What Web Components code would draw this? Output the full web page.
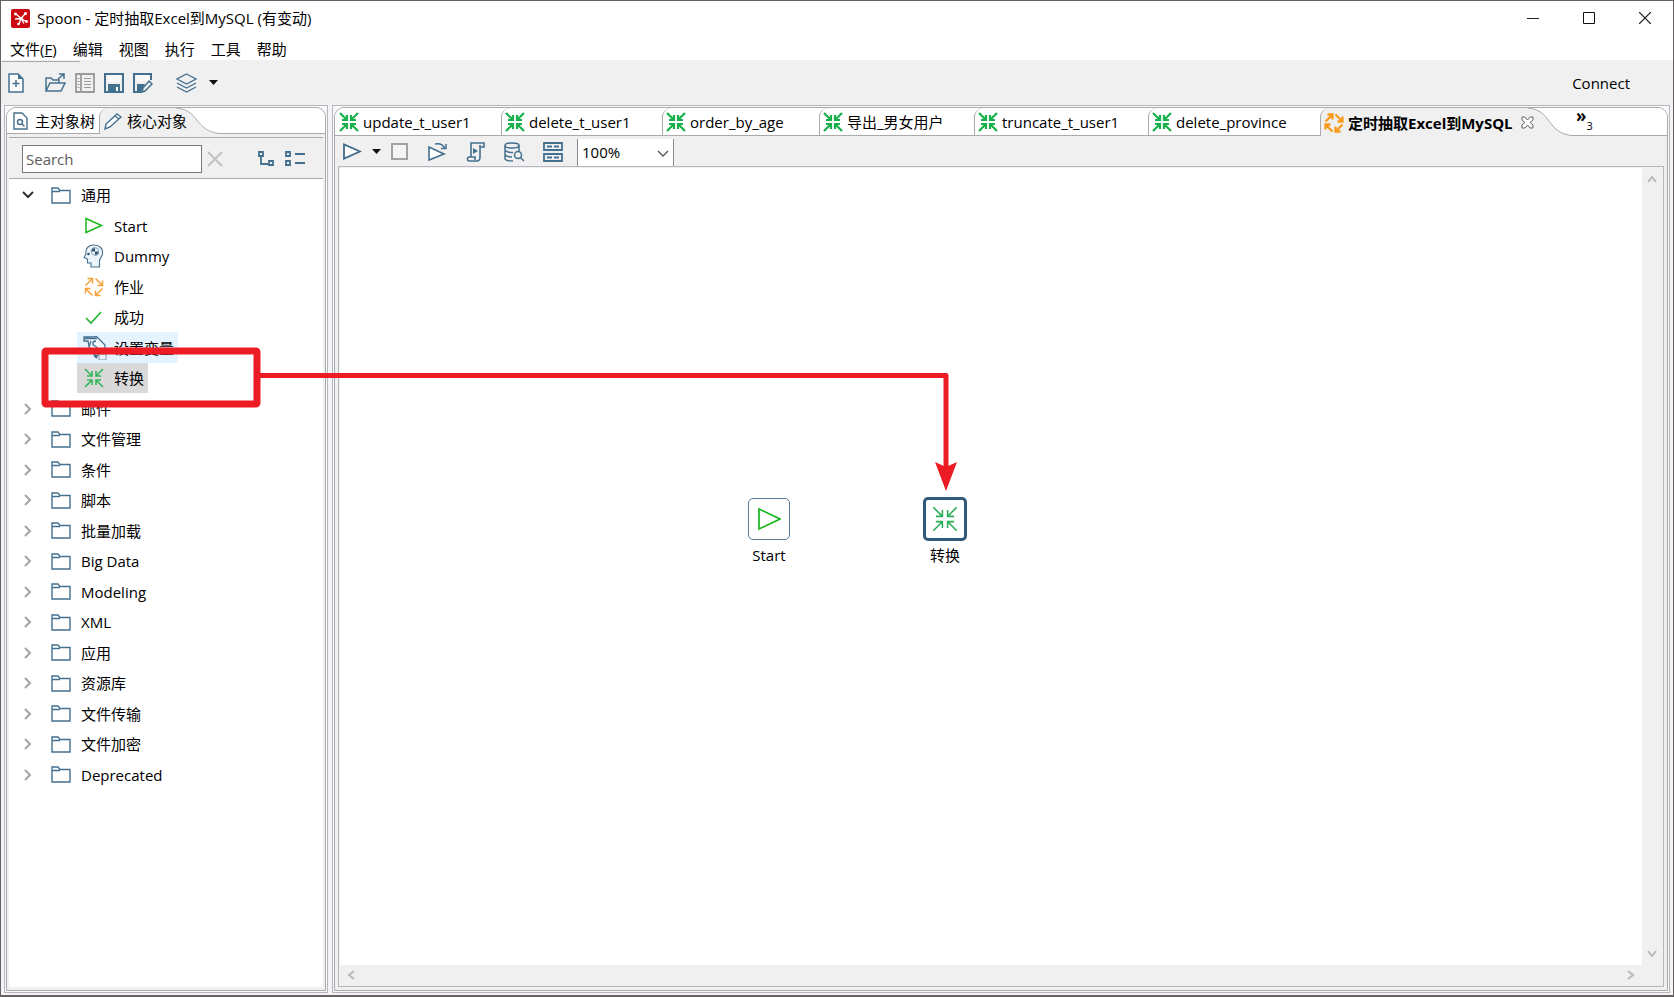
<!DOCTYPE html>
<html lang="zh-CN">
<head>
<meta charset="utf-8">
<title>Spoon - 定时抽取Excel到MySQL (有变动)</title>
<style>
html, body { margin: 0; height: 100%; }
body { background: #f0f0f0; color: #000; font: 15px/20px "Open Sans", "Noto Sans CJK SC", sans-serif; overflow: hidden; }
</style>
</head>
<body>
<app-window>
  <title-bar slot="title">Spoon - 定时抽取Excel到MySQL (有变动)</title-bar>
  <menu-bar slot="menu"></menu-bar>
  <main-toolbar slot="toolbar"></main-toolbar>
  <view-panel slot="side" class="side">
    <tab-strip slot="tabs">
      <tab-item class="tree" icon="page-find">主对象树</tab-item>
      <tab-item class="core" icon="pencil" active>核心对象</tab-item>
    </tab-strip>
    <search-bar slot="bar"></search-bar>
    <object-tree>
      <tree-item icon="folder" state="open">通用</tree-item>
      <tree-item icon="start" child>Start</tree-item>
      <tree-item icon="dummy" child>Dummy</tree-item>
      <tree-item icon="job" child>作业</tree-item>
      <tree-item icon="check" child>成功</tree-item>
      <tree-item icon="variable" child hot>设置变量</tree-item>
      <tree-item icon="trans-thin" child selected>转换</tree-item>
      <tree-item icon="folder" state="closed">邮件</tree-item>
      <tree-item icon="folder" state="closed">文件管理</tree-item>
      <tree-item icon="folder" state="closed">条件</tree-item>
      <tree-item icon="folder" state="closed">脚本</tree-item>
      <tree-item icon="folder" state="closed">批量加载</tree-item>
      <tree-item icon="folder" state="closed">Big Data</tree-item>
      <tree-item icon="folder" state="closed">Modeling</tree-item>
      <tree-item icon="folder" state="closed">XML</tree-item>
      <tree-item icon="folder" state="closed">应用</tree-item>
      <tree-item icon="folder" state="closed">资源库</tree-item>
      <tree-item icon="folder" state="closed">文件传输</tree-item>
      <tree-item icon="folder" state="closed">文件加密</tree-item>
      <tree-item icon="folder" state="closed">Deprecated</tree-item>
    </object-tree>
  </view-panel>
  <view-panel slot="editor">
    <tab-strip slot="tabs" tall>
      <tab-item icon="trans" style="--tab-width:166px">update_t_user1</tab-item>
      <tab-item icon="trans" style="--tab-width:161px">delete_t_user1</tab-item>
      <tab-item icon="trans" style="--tab-width:157px">order_by_age</tab-item>
      <tab-item icon="trans" style="--tab-width:155px">导出_男女用户</tab-item>
      <tab-item icon="trans" style="--tab-width:174px">truncate_t_user1</tab-item>
      <tab-item icon="trans" style="--tab-width:172px">delete_province</tab-item>
      <tab-item icon="job-bold" style="--tab-width:208px" active closable>定时抽取Excel到MySQL</tab-item>
      <tab-overflow>3</tab-overflow>
    </tab-strip>
    <editor-toolbar slot="bar"></editor-toolbar>
    <job-canvas>
      <job-node icon="start-big" style="left:408px;top:330px">Start</job-node>
      <job-node icon="trans-big" selected style="left:584px;top:330px">转换</job-node>
    </job-canvas>
  </view-panel>
  <guide-arrow slot="overlay"></guide-arrow>
</app-window>

<script>
const BLUE = '#44708f';
const arrowsIn = (c, w) => `<g fill="none" stroke="${c}" stroke-width="${w}"><path d="M1 1l6.500 6.500M8 3v5H3M19 1l-6.500 6.500M12 3v5h5M1 19l6.500-6.500M3 12h5v5M19 19l-6.500-6.500M17 12h-5v5"/></g>`;
const arrowsOut = (c, w) => `<g fill="none" stroke="${c}" stroke-width="${w}"><path d="M1.500 8.500L8 2M3.500 1.500H8.500V6.500M11.500 1.500L18 8M18.500 3.500V8.500H13.500M18.500 11.500L12 18M16.500 18.500H11.500V13.500M8.500 18.500L2 12M1.500 16.500V11.500H6.500"/></g>`;
const ICONS = {
  logo: [19, 19, `<rect width="19" height="19" rx="2" fill="#cb0a12"/><g stroke="#fff" stroke-width="1.300" fill="#fff"><path d="M10 9.500L5 5M10 9.500L14 5M10 9.500l5 3M10 9.500L8 15M10 9.500L4 10M10 9.500l3 5"/><circle cx="10" cy="9.500" r="1.200"/><circle cx="4.500" cy="5" r=".8"/><circle cx="14.500" cy="4.500" r=".9"/><circle cx="15.500" cy="12.500" r=".8"/><circle cx="7.500" cy="15" r=".7"/></g>`],
  minimize: [12, 12, `<path d="M0 6.500h12" stroke="#222"/>`],
  maximize: [12, 12, `<path d="M.5.5h11v11H.5z" fill="none" stroke="#111"/>`],
  close: [12, 12, `<path d="M0 0l12 12M12 0L0 12" stroke="#111" stroke-width="1.200"/>`],
  'new': [16, 20, `<g fill="none" stroke="${BLUE}" stroke-width="1.500"><path d="M1 1h9l5 5v13H1z" fill="#fafcfd"/><path d="M8 7v7M4.500 10.500h7"/></g><path d="M10 1v5h5z" fill="${BLUE}"/>`],
  open: [21, 20, `<g fill="none" stroke="${BLUE}" stroke-width="1.500"><path d="M1 18V5h5l2 2h6v3M1 18l4-8h15l-4 8zM13 6l6-5M14 1h5v5"/></g>`],
  explore: [20, 20, `<g fill="none" stroke="#9b9b9b"><path d="M1 1h18v18H1zM6 1v18" stroke-width="1.800"/><path d="M9 5.500h7M9 8.500h7M9 11.500h7M9 14.500h7M2.500 5.500h2M2.500 8.500h2M2.500 11.500h2M2.500 14.500h2" stroke-width="1.200"/></g>`],
  save: [20, 20, `<path d="M1 1h18v18H1z" fill="none" stroke="${BLUE}" stroke-width="2"/><path d="M4 11h12v8H4z" fill="${BLUE}"/><path d="M12 14h2v4h-2z" fill="#fff"/><path d="M3.500 2h13v7h-13z" fill="#f8f8f8"/>`],
  saveas: [20, 20, `<path d="M9 19H1V1h17v6" fill="none" stroke="${BLUE}" stroke-width="2"/><path d="M3.500 2h13v6h-13z" fill="#f8f8f8"/><path d="M4 11h8l-4 8H4z" fill="${BLUE}"/><path d="M16 8l3 3-7 7-3 1 1-4z" fill="#f0f0f0" stroke="${BLUE}" stroke-width="1.500"/>`],
  layers: [21, 20, `<g fill="none" stroke="${BLUE}" stroke-width="1.400"><path d="M10.500 1L20 6l-9.500 5L1 6zM1 10l9.500 5 9.500-5M1 14l9.500 5 9.500-5"/></g>`],
  caret: [9, 6, `<path d="M0 0h9L4.500 5z" fill="#111"/>`],
  'page-find': [15, 18, `<g fill="none" stroke="${BLUE}" stroke-width="1.400"><path d="M1 1h8l5 5v11H1z"/><circle cx="7" cy="10" r="2.500"/><path d="M9 12l2.500 2.500"/></g>`],
  pencil: [19, 18, `<path d="M13 2l4 3L6 15l-5 2 1-5zM11 4l4 3" fill="#fff" stroke="${BLUE}" stroke-width="1.400"/>`],
  clear: [17, 16, `<path d="M1 1l14 14M15 1L1 15" stroke="#c2c2c2" stroke-width="2"/>`],
  expand: [17, 16, `<g fill="none" stroke="${BLUE}" stroke-width="1.800"><path d="M1 1h4v4H1zM11 10h4v4h-4zM3 6v7h7"/></g>`],
  collapse: [20, 16, `<g fill="none" stroke="${BLUE}" stroke-width="1.800"><path d="M1 1h4v4H1zM1 10h4v4H1zM10 3h10M10 12h10"/></g>`],
  folder: [20, 17, `<path d="M1 16V1h6l2 2.500h10V16zM1 4.500h8" fill="none" stroke="${BLUE}" stroke-width="1.400"/>`],
  start: [20, 18, `<path d="M2 1.500v14L17.500 8.500z" fill="none" stroke="#1db51d" stroke-width="1.500"/>`],
  dummy: [21, 24, `<path d="M8 23v-4H4.500v-4L1 13.500l2-3.500C2 4 6 1 11 1c6 0 9 4 8.500 8 0 4-3 5-3 8v6z" fill="#edf4fa" stroke="${BLUE}" stroke-width="1.100"/><g fill="#2b5577"><circle cx="5.500" cy="10" r="1.300"/><path d="M12 3.500a4 4 0 0 0-4 4h4zM12 7.500v4a4 4 0 0 0 4-4z"/></g><circle cx="12" cy="7.500" r="3.800" fill="none" stroke="#8fa8bb"/>`],
  job: [20, 20, arrowsOut('#f7a13b', 1.5)],
  'job-bold': [20, 20, arrowsOut('#f89a1c', 2.3)],
  check: [20, 16, `<path d="M2 9l5 5L17 3" fill="none" stroke="#20b52b" stroke-width="1.600"/>`],
  variable: [24, 24, `<g fill="#eef5fb" stroke="${BLUE}" stroke-width="1.300"><path d="M5 5H1V1h11l1-1 9 9v3l-8 8-7-6z"/><path d="M1 2.500h13M8 5L6 11M13 5c-4 0-4 4-1 5s2 5-2 4" fill="none"/><path d="M16 18h7v6h-7z" stroke="#9aabb8"/></g><path d="M11 19l3 3" stroke="${BLUE}" stroke-width="2"/>`],
  'trans-thin': [20, 20, arrowsIn('#35b45c', 1.6)],
  trans: [20, 20, arrowsIn('#17b04a', 2.2)],
  run: [20, 18, `<path d="M2 1.500v14L18 8.500z" fill="#fff" stroke="#3d6a8a" stroke-width="1.800"/>`],
  stop: [18, 18, `<path d="M1 1h15v15H1z" fill="#f4f4f4" stroke="#a2a2a2" stroke-width="2"/>`],
  replay: [21, 20, `<path d="M2 5v13L17 12z" fill="#fff" stroke="${BLUE}" stroke-width="1.600"/><path d="M8 2c6-1 9 2 10 5M14 6.500h5V2" fill="none" stroke="${BLUE}" stroke-width="1.500"/>`],
  script: [20, 20, `<g fill="none" stroke="${BLUE}" stroke-width="1.600"><path d="M5 15V1h13v4h-4M14 3v12c0 3-1 4-3 4H3c-2 0-2-4 0-4h6v3"/></g><path d="M7 6v6l5-3z" fill="${BLUE}"/>`],
  database: [21, 20, `<g fill="none" stroke="${BLUE}" stroke-width="1.500"><ellipse cx="8" cy="3.500" rx="7" ry="2.500"/><path d="M1 3.500v13c0 1.500 3 2.500 8 2.500M15 3.500V9M1 8c1 2 5 2.500 8 2.500M1 12.500c1 2 4 2.500 7 2.500"/><circle cx="14" cy="13" r="3.500" fill="#f0f0f0"/><path d="M16.500 15.500L20 19"/></g>`],
  grid: [20, 20, `<g fill="none" stroke="${BLUE}" stroke-width="1.800"><path d="M1 1h18v7H1zM1 12h18v7H1z"/><path d="M4 4.500h5M11 4.500h5M4 15.500h5M11 15.500h5"/></g>`],
  'close-tab': [13, 13, `<path d="M1 1h3l2.500 3L9 1h3v3L9 6.500 12 9v3H9L6.500 9 4 12H1V9l3-2.500L1 4z" fill="#fff" stroke="#666"/>`],
  'start-big': [24, 24, `<path d="M2 2v20L23 12z" fill="none" stroke="#17b51d" stroke-width="1.700"/>`],
  'trans-big': [26, 26, `<g transform="scale(1.300)">${arrowsIn('#2aae57', 1.2)}</g>`],
  down: [12, 8, `<path d="M1 1l5 5 5-5" fill="none" stroke="#333" stroke-width="2"/>`],
  drop: [12, 8, `<path d="M1 1l5 5 5-5" fill="none" stroke="#555" stroke-width="1.300"/>`],
  right: [8, 12, `<path d="M1 1l5 5-5 5" fill="none" stroke="#a3a3a3" stroke-width="2"/>`],
  'scroll-up': [10, 8, `<path d="M1 7l4-5 4 5" fill="none" stroke="#b8b8b8" stroke-width="2"/>`],
  'scroll-down': [10, 8, `<path d="M1 1l4 5 4-5" fill="none" stroke="#b8b8b8" stroke-width="2"/>`],
  'scroll-left': [8, 10, `<path d="M7 1L2 5l5 4" fill="none" stroke="#b8b8b8" stroke-width="2"/>`],
  'scroll-right': [8, 10, `<path d="M1 1l5 4-5 4" fill="none" stroke="#b8b8b8" stroke-width="2"/>`]
};

const BASE = `*{box-sizing:border-box}button,input,select{font:inherit;color:inherit;margin:0;padding:0;border:0;background:none;border-radius:0}:host{box-sizing:border-box}`;

function define(name, markup) {
  customElements.define(name, class extends HTMLElement {
    connectedCallback() {
      if (this.shadowRoot) return;
      const root = this.attachShadow({ mode: 'open' });
      const template = document.createElement('template');
      template.innerHTML = typeof markup === 'function' ? markup(this) : markup;
      root.append(template.content.cloneNode(true));
    }
  });
}

define('ui-icon', el => {
  const [w, h, body] = ICONS[el.getAttribute('name')];
  return `<style>:host{display:block;flex:none}svg{display:block}</style>
  <svg width="${w}" height="${h}" viewBox="0 0 ${w} ${h}" aria-hidden="true">${body}</svg>`;
});

define('app-window', `<style>${BASE}
:host{position:relative;display:grid;height:100vh;grid-template-rows:37px 22px 45px minmax(0,1fr);border:solid #666264;border-width:1px 1px 2px}
main{display:grid;grid-template-columns:324px minmax(0,1fr);gap:4px;padding:0 3px 2px;min-height:0;background:#f4f4f6}
</style>
<slot name="title"></slot><slot name="menu"></slot><slot name="toolbar"></slot>
<main><slot name="side"></slot><slot name="editor"></slot></main>
<slot name="overlay"></slot>`);

define('title-bar', `<style>${BASE}
:host{display:flex;align-items:center;background:#fff;padding:0 0 3px 10px}
h1{font:inherit;margin:0 auto 0 7px}
button{width:56px;height:34px;display:grid;place-items:center}
</style>
<ui-icon name="logo"></ui-icon><h1><slot></slot></h1>
<button aria-label="Minimize"><ui-icon name="minimize"></ui-icon></button>
<button aria-label="Maximize"><ui-icon name="maximize"></ui-icon></button>
<button aria-label="Close"><ui-icon name="close"></ui-icon></button>`);

define('menu-bar', `<style>${BASE}
:host{display:block;background:#fff;padding-left:9px}
nav{display:flex;gap:16px;line-height:22px}
button{white-space:nowrap}
</style>
<nav><button>文件(<u>F</u>)</button><button>编辑</button><button>视图</button><button>执行</button><button>工具</button><button>帮助</button></nav>`);

define('main-toolbar', `<style>${BASE}
:host{position:relative;display:flex;align-items:center;background:#f0f0f0;padding:1px 43px 0 7px}
:host::before{content:"";position:absolute;left:1px;top:1px;width:78px;height:1px;background:#aaa}
.files{display:flex;gap:9px;margin:0 23px 0 21px}
.view{display:flex;align-items:center;gap:12px}
.connect{margin-left:auto}
</style>
<button aria-label="New"><ui-icon name="new"></ui-icon></button>
<div class="files">
<button aria-label="Open"><ui-icon name="open"></ui-icon></button>
<button aria-label="Explore"><ui-icon name="explore"></ui-icon></button>
<button aria-label="Save"><ui-icon name="save"></ui-icon></button>
<button aria-label="Save as"><ui-icon name="saveas"></ui-icon></button>
</div>
<button class="view" aria-label="Perspective"><ui-icon name="layers"></ui-icon><ui-icon name="caret"></ui-icon></button>
<button class="connect">Connect</button>`);

define('view-panel', `<style>${BASE}
:host{display:block;min-height:0;min-width:0;border:1px solid #b6b6c1;padding:1px;background:#fafafa}
section{display:flex;flex-direction:column;height:100%;border:1px solid #aaa;border-radius:10px 10px 0 0;background:#f0f0f0;padding-bottom:3px}
.body{flex:1;min-height:0;display:flex;flex-direction:column;padding:0 3px}
:host(.side) .body{padding:3px 2px 0}
</style>
<section><slot name="tabs"></slot><div class="body"><slot name="bar"></slot><slot></slot></div></section>`);

define('tab-strip', `<style>${BASE}
:host{display:block;flex:none;height:26px;border-bottom:1px solid #aaa;border-radius:9px 9px 0 0;background:#fff}
:host([tall]){height:28px}
div{display:flex;height:100%}
</style><div role="tablist"><slot></slot></div>`);

define('tab-item', el => `<style>${BASE}
:host{display:block;flex:0 0 var(--tab-width,auto);min-width:0;height:100%}
button{position:relative;display:flex;align-items:center;width:100%;height:100%;padding:1px 0 0 3px;text-align:left;white-space:nowrap;border-left:1px solid #aaa;border-top-left-radius:9px}
:host(:first-child) button{border-left-color:transparent}
:host(.tree){flex-basis:92px}
:host(.core){flex-basis:77px}
:host(.tree) button{padding:0 0 0 5px}
:host(.core) button{padding:0 0 0 4px}
.label{margin-left:4px;position:relative}
:host(.tree) .label{margin-left:7px}
:host([active]) button{background:#f0f0f0;height:calc(100% + 1px)}
:host([closable]) .label{font-weight:700}
.curve{position:absolute;left:100%;top:0;height:100%;width:44px;display:block}
.close{position:relative;margin-left:8px}
</style>
<button role="tab" aria-selected="${el.hasAttribute('active')}">
${el.hasAttribute('active') ? '<svg class="curve" viewBox="0 0 44 28" preserveAspectRatio="none" aria-hidden="true"><path d="M-1 0C24 1 18 25 44 27.500V28H-1z" fill="#f0f0f0"/><path d="M-1 0C24 1 18 25 44 27.500" fill="none" stroke="#aaa"/></svg>' : ''}
<ui-icon name="${el.getAttribute('icon')}"></ui-icon><span class="label"><slot></slot></span>
${el.hasAttribute('closable') ? '<ui-icon class="close" name="close-tab"></ui-icon>' : ''}
</button>`);

define('tab-overflow', `<style>${BASE}
:host{display:block;margin-left:48px}
button{display:flex;align-items:flex-start;height:100%}
b{font-size:17px;line-height:16px}
span{font-size:11px;line-height:16px;margin-top:10px}
</style><button aria-label="More tabs"><b>»</b><span><slot></slot></span></button>`);

define('search-bar', `<style>${BASE}
:host{display:flex;align-items:center;flex:none;height:42px;border:solid #aaa;border-width:1px 0;padding:1px 18px 0 13px}
input{width:180px;height:28px;border:1px solid #7a7a7a;background:#fff;padding:0 3px}
input::placeholder{color:#5c5c5c;opacity:1}
.clear{margin-left:5px}
.expand{margin:0 10px 0 auto}
</style>
<input type="text" placeholder="Search" aria-label="Search">
<button class="clear" aria-label="Clear"><ui-icon name="clear"></ui-icon></button>
<button class="expand" aria-label="Expand all"><ui-icon name="expand"></ui-icon></button>
<button aria-label="Collapse all"><ui-icon name="collapse"></ui-icon></button>`);

define('object-tree', `<style>${BASE}
:host{display:block;flex:1;min-height:0;background:#fff;overflow:hidden;padding-top:1px}
div{display:grid;grid-auto-rows:30px 31px}
</style><div role="tree"><slot></slot></div>`);

define('tree-item', el => `<style>${BASE}
:host{display:flex;align-items:center;padding-left:13px}
:host([child]){padding-left:68px}
.twist{width:28px;display:grid;justify-items:start;flex:none}
:host([state=closed]) .twist{padding-left:2px}
.row{display:flex;align-items:center;height:100%}
.icon{width:21px;flex:none;display:grid;justify-items:center}
.label{margin-left:10px;white-space:nowrap}
:host([child]) .row{padding:0 4px 0 6px}
:host([hot]) .row{background:#e5f3ff}
:host([selected]) .row{background:#d9d9d9}
</style>
${el.hasAttribute('state') ? `<button class="twist" aria-label="Toggle"><ui-icon name="${el.getAttribute('state') === 'open' ? 'down' : 'right'}"></ui-icon></button>` : ''}
<span class="row" role="treeitem"><span class="icon"><ui-icon name="${el.getAttribute('icon')}"></ui-icon></span><span class="label"><slot></slot></span></span>`);

define('editor-toolbar', `<style>${BASE}
:host{display:flex;align-items:center;flex:none;height:30px;padding:2px 0 0 4px}
.run{display:flex;align-items:center;gap:10px}
.tools{display:flex;align-items:center;gap:18px;margin:0 14px 0 10px}
.zoom{position:relative;height:27px;width:97px;border:solid #8a8a8a;border-width:0 1px;background:#fff}
select{appearance:none;width:100%;height:100%;padding-left:4px;display:block}
.zoom ui-icon{position:absolute;right:4px;top:11px;pointer-events:none}
</style>
<button class="run" aria-label="Run"><ui-icon name="run"></ui-icon><ui-icon name="caret"></ui-icon></button>
<div class="tools">
<button aria-label="Stop"><ui-icon name="stop"></ui-icon></button>
<button aria-label="Replay"><ui-icon name="replay"></ui-icon></button>
<button aria-label="SQL"><ui-icon name="script"></ui-icon></button>
<button aria-label="Explore database"><ui-icon name="database"></ui-icon></button>
<button aria-label="Show results"><ui-icon name="grid"></ui-icon></button>
</div>
<div class="zoom"><select aria-label="Zoom"><option>100%</option></select><ui-icon name="drop"></ui-icon></div>`);

define('job-canvas', `<style>${BASE}
:host{position:relative;flex:1;min-height:0;display:grid;grid-template:minmax(0,1fr) 20px / minmax(0,1fr) 20px;border:1px solid #b6b6c1;background:#f0f0f0;padding:1px}
.area{background:#fff}
.v{display:flex;flex-direction:column;justify-content:space-between;align-items:center;padding:7px 0}
.h{display:flex;justify-content:space-between;align-items:center;padding:0 7px}
</style>
<div class="area"><slot></slot></div>
<div class="v"><ui-icon name="scroll-up"></ui-icon><ui-icon name="scroll-down"></ui-icon></div>
<div class="h"><ui-icon name="scroll-left"></ui-icon><ui-icon name="scroll-right"></ui-icon></div>`);

define('job-node', el => `<style>${BASE}
:host{position:absolute;display:grid;justify-items:center;width:44px;gap:4px}
.box{width:42px;height:42px;margin:1px;border:1px solid #58799a;border-radius:5px;background:#fff;display:grid;place-items:center}
:host([selected]) .box{width:44px;height:44px;margin:0;border:3px solid #2f5a7c}
</style><div class="box"><ui-icon name="${el.getAttribute('icon')}"></ui-icon></div><span><slot></slot></span>`);

define('guide-arrow', `<style>${BASE}
:host{position:absolute;left:40px;top:346px;pointer-events:none}
svg{display:block}
</style>
<svg width="920" height="150" viewBox="0 0 920 150" aria-hidden="true">
<rect x="4" y="4" width="212" height="53" rx="1" fill="none" stroke="#ed1c24" stroke-width="7" stroke-linejoin="round"/>
<path d="M218 28.500H905V124" fill="none" stroke="#ed1c24" stroke-width="5" stroke-linejoin="round"/>
<path d="M905 144l-11-29 11 5 11-5z" fill="#ed1c24"/>
</svg>`);
</script>
</body>
</html>
